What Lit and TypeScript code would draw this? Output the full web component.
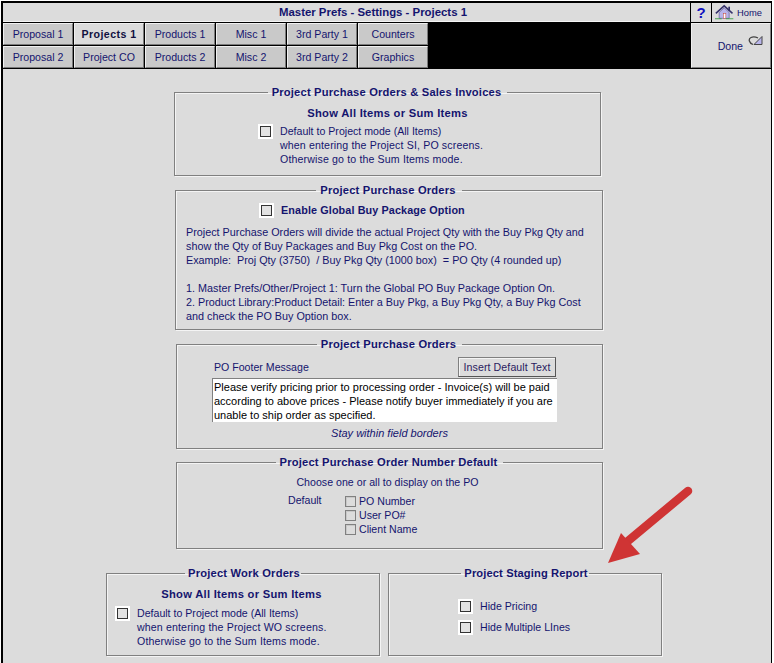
import { LitElement, html, css } from "lit";
import { customElement } from "lit/decorators.js";

const TABS = [
  ["Proposal 1", "Projects 1", "Products 1", "Misc 1", "3rd Party 1", "Counters"],
  ["Proposal 2", "Project CO", "Products 2", "Misc 2", "3rd Party 2", "Graphics"],
];

@customElement("app-root")
export class AppRoot extends LitElement {
  static styles = css`
    :host {
      display: block;
      width: 774px;
      height: 663px;
      overflow: hidden;
      background: #fff;
      font-family: "Liberation Sans", Arial, sans-serif;
      font-size: 10.6px;
      line-height: 14px;
      color: #14146e;
    }
    .frame {
      position: relative;
      box-sizing: border-box;
      width: 771px;
      height: 662px;
      margin: 1px 0 0 1px;
      background: #000;
      padding: 2px 1px 0 2px;
      display: flex;
      flex-direction: column;
    }
    .top { display: flex; height: 19px; gap: 1px; margin-bottom: 1px; }
    .title {
      width: 687px;
      padding-left: 53px;
      background: #dcdcdc;
      border-bottom: 1px solid #f4f4f4;
      box-sizing: border-box;
      text-align: center;
      font-size: 11.4px;
      font-weight: bold;
      line-height: 19px;
      color: #14146e;
    }
    .q {
      width: 20px;
      background: #dcdcdc;
      text-align: center;
      font-size: 15px;
      line-height: 19px;
      font-weight: bold;
      color: #1010c0;
    }
    .home {
      flex: 1;
      background: #dcdcdc;
      display: flex;
      align-items: center;
      gap: 2px;
      padding-left: 3px;
      font-size: 9.4px;
    }
    .band { display: flex; height: 45px; margin-bottom: 1px; }
    .tabs {
      display: grid;
      grid-template-columns: repeat(6, 70px);
      grid-auto-rows: 22px;
      gap: 1px;
    }
    .tab {
      box-sizing: border-box;
      background: #c9c9c9;
      border: 1px solid;
      border-color: #f0f0f0 #7a7a7a #7a7a7a #f0f0f0;
      text-align: center;
      line-height: 20px;
      font-size: 10.6px;
    }
    .tab.on { background: #dcdcdc; font-weight: bold; color: #101040; letter-spacing: 0.45px; }
    .spacer { flex: 1; }
    .done {
      box-sizing: border-box;
      width: 80px;
      background: #dcdcdc;
      border: 1px solid;
      border-color: #f0f0f0 #808080 #808080 #f0f0f0;
      display: flex;
      align-items: center;
      justify-content: flex-end;
      gap: 5px;
      padding: 0 7px 0 0;
    }
    .done svg { margin-bottom: 9px; }
    .main {
      flex: 1;
      background: #dcdcdc;
      display: flex;
      flex-direction: column;
      align-items: flex-start;
    }
    fieldset {
      box-sizing: border-box;
      margin: 0;
      padding: 0;
      border: 1px solid #808080;
      box-shadow: 1px 1px 0 #f4f4f4, inset 1px 1px 0 #f4f4f4;
      min-width: 0;
    }
    legend {
      margin: 0 auto;
      padding: 0 5px;
      font-size: 11.15px;
      font-weight: bold;
      line-height: 14px;
      letter-spacing: 0.2px;
      white-space: nowrap;
      position: relative;
      left: -1px;
    }
    .tight legend { padding: 0 1px 0 3px; left: 0; }
    .p1 { margin: 16px 0 0 171px; width: 427px; height: 91px; }
    .p2 { margin: 7px 0 0 172px; width: 428px; height: 147px; }
    .p3 { margin: 7px 0 0 173px; width: 427px; height: 112px; }
    .p4 { margin: 6px 0 0 173px; width: 427px; height: 94px; }
    .bottom { display: flex; gap: 8px; margin: 17px 0 0 103px; }
    .p5, .p6 { width: 274px; height: 90px; }
    .head {
      text-align: center;
      font-weight: bold;
      font-size: 11.2px;
      letter-spacing: 0.27px;
    }
    .line { white-space: nowrap; }
    .line.w { letter-spacing: 0.14px; }
    .row { display: flex; align-items: flex-start; }
    .cb {
      box-sizing: border-box;
      width: 15px;
      height: 15px;
      flex: none;
      background: #fff;
      padding: 2px;
    }
    .cb i {
      display: block;
      box-sizing: border-box;
      width: 11px;
      height: 11px;
      border: 1px solid #333;
      background: #e2e2e2;
    }
    .s1 { padding: 7px 0 0; }
    .s1 .row { margin: 4px 0 0 83px; gap: 7px; }
    .s2 .top-row {
      margin: 6px 0 0 83px;
      gap: 7px;
      font-weight: bold;
      letter-spacing: 0.12px;
      font-size: 10.8px;
      line-height: 15px;
    }
    .s2 .body { margin: 7px 0 0 10px; font-size: 10.8px; }
    .s3 .hdr {
      display: flex;
      justify-content: space-between;
      align-items: center;
      margin: 6px 46px 0 37px;
    }
    .btn {
      box-sizing: border-box;
      height: 20px;
      width: 98px;
      border: 1px solid;
      border-color: #808080 #555 #555 #808080;
      box-shadow: inset 1px 1px 0 #f4f4f4;
      background: #dcdcdc;
      text-align: center;
      line-height: 18px;
      letter-spacing: 0.1px;
      color: #2a1a60;
    }
    .ta {
      box-sizing: border-box;
      margin: 1px 0 0 35px;
      width: 345px;
      height: 44px;
      background: #fff;
      border-top: 1px solid #808080;
      border-left: 1px solid #808080;
      padding: 1px 0 0 1px;
      color: #000;
      font-size: 11px;
    }
    .note { text-align: center; font-style: italic; margin-top: 4px; font-size: 11px; }
    .s4 .c { text-align: center; margin-top: 6px; padding-right: 4px; letter-spacing: 0.02px; }
    .opts { display: flex; margin: 5px 0 0 111px; }
    .opts .lbl { width: 57px; margin-top: -1px; }
    .opt { display: flex; align-items: center; gap: 3px; height: 14px; }
    .gb {
      box-sizing: border-box;
      width: 11px;
      height: 11px;
      border: 1px solid #808080;
      box-shadow: inset 1px 1px 0 #c8c8c8;
    }
    .s5 .row { margin: 5px 0 0 8px; gap: 7px; }
    .s5 .head { margin-top: 7px; padding-right: 3px; }
    .s6 { padding-top: 19px; }
    .s6 legend { letter-spacing: 0.12px; }
    .s6 .row { margin: 0 0 6px 69px; gap: 7px; }
    .arrow { position: absolute; left: 599px; top: 479px; pointer-events: none; }
  `;

  private cb() {
    return html`<span class="cb"><i></i></span>`;
  }

  render() {
    return html`
      <div class="frame">
        <div class="top">
          <div class="title">Master Prefs - Settings - Projects 1</div>
          <div class="q">?</div>
          <div class="home">
            <svg width="20" height="17" viewBox="0 0 24 18">
              <path d="M1 10 L11 1 L21 10" fill="none" stroke="#34306a" stroke-width="1.8" />
              <path d="M5 9 L11 3.5 L17 9 V16 H5 Z" fill="#b8b4ea" stroke="#5a56a0" stroke-width="0.8" />
              <rect x="10" y="10" width="3" height="6" fill="#fff" stroke="#c04030" stroke-width="0.6" />
              <rect x="16" y="2" width="2" height="5" fill="#34306a" />
              <path d="M0 16.5 H8" stroke="#2f9a3c" stroke-width="1" />
              <path d="M13 16.5 H22" stroke="#2f9a3c" stroke-width="1" />
            </svg>
            <span>Home</span>
          </div>
        </div>
        <div class="band">
          <div class="tabs">
            ${TABS.flat().map(
              (t) => html`<div class="tab ${t === "Projects 1" ? "on" : ""}">${t}</div>`
            )}
          </div>
          <div class="spacer"></div>
          <div class="done">
            <span>Done</span>
            <svg width="15" height="12" viewBox="0 0 15 12">
              <path d="M5 9.5 C1 8 0 4 3 2.5 C5 1.5 8 2 10 3" fill="none" stroke="#444" stroke-width="1.3" />
              <path d="M14 1.5 V9.5 H6 Z" fill="#b9b5ea" stroke="#444" stroke-width="1" />
            </svg>
          </div>
        </div>
        <div class="main">
          <fieldset class="p1 s1">
            <legend>Project Purchase Orders &amp; Sales Invoices</legend>
            <div class="head">Show All Items or Sum Items</div>
            <div class="row">
              ${this.cb()}
              <div>
                <div class="line">Default to Project mode (All Items)</div>
                <div class="line w">when entering the Project SI, PO screens.</div>
                <div class="line w">Otherwise go to the Sum Items mode.</div>
              </div>
            </div>
          </fieldset>
          <fieldset class="p2 s2">
            <legend>Project Purchase Orders</legend>
            <div class="row top-row">${this.cb()}<span>Enable Global Buy Package Option</span></div>
            <div class="body">
              <div class="line">Project Purchase Orders will divide the actual Project Qty with the Buy Pkg Qty and</div>
              <div class="line">show the Qty of Buy Packages and Buy Pkg Cost on the PO.</div>
              <div class="line">Example:&nbsp; Proj Qty (3750)&nbsp; / Buy Pkg Qty (1000 box)&nbsp; = PO Qty (4 rounded up)</div>
              <div class="line">&nbsp;</div>
              <div class="line">1. Master Prefs/Other/Project 1: Turn the Global PO Buy Package Option On.</div>
              <div class="line">2. Product Library:Product Detail: Enter a Buy Pkg, a Buy Pkg Qty, a Buy Pkg Cost</div>
              <div class="line">and check the PO Buy Option box.</div>
            </div>
          </fieldset>
          <fieldset class="p3 s3">
            <legend>Project Purchase Orders</legend>
            <div class="hdr"><span>PO Footer Message</span><div class="btn">Insert Default Text</div></div>
            <div class="ta">
              <div class="line">Please verify pricing prior to processing order - Invoice(s) will be paid</div>
              <div class="line">according to above prices - Please notify buyer immediately if you are</div>
              <div class="line">unable to ship order as specified.</div>
            </div>
            <div class="note">Stay within field borders</div>
          </fieldset>
          <fieldset class="p4 s4">
            <legend>Project Purchase Order Number Default</legend>
            <div class="c">Choose one or all to display on the PO</div>
            <div class="opts">
              <div class="lbl">Default</div>
              <div>
                <div class="opt"><span class="gb"></span>PO Number</div>
                <div class="opt"><span class="gb"></span>User PO#</div>
                <div class="opt"><span class="gb"></span>Client Name</div>
              </div>
            </div>
          </fieldset>
          <div class="bottom">
            <fieldset class="p5 s5 tight">
              <legend>Project Work Orders</legend>
              <div class="head">Show All Items or Sum Items</div>
              <div class="row">
                ${this.cb()}
                <div>
                  <div class="line">Default to Project mode (All Items)</div>
                  <div class="line w">when entering the Project WO screens.</div>
                  <div class="line w">Otherwise go to the Sum Items mode.</div>
                </div>
              </div>
            </fieldset>
            <fieldset class="p6 s6 tight">
              <legend>Project Staging Report</legend>
              <div class="row">${this.cb()}<span>Hide Pricing</span></div>
              <div class="row">${this.cb()}<span>Hide Multiple LInes</span></div>
            </fieldset>
          </div>
        </div>
        <svg class="arrow" width="100" height="90" viewBox="600 480 100 90">
          <path d="M688 491 L628 541" stroke="#cf3434" stroke-width="8.5" stroke-linecap="round" fill="none" />
          <path d="M608 563 L621 533 L640 554 Z" fill="#cf3434" />
        </svg>
      </div>
    `;
  }
}
